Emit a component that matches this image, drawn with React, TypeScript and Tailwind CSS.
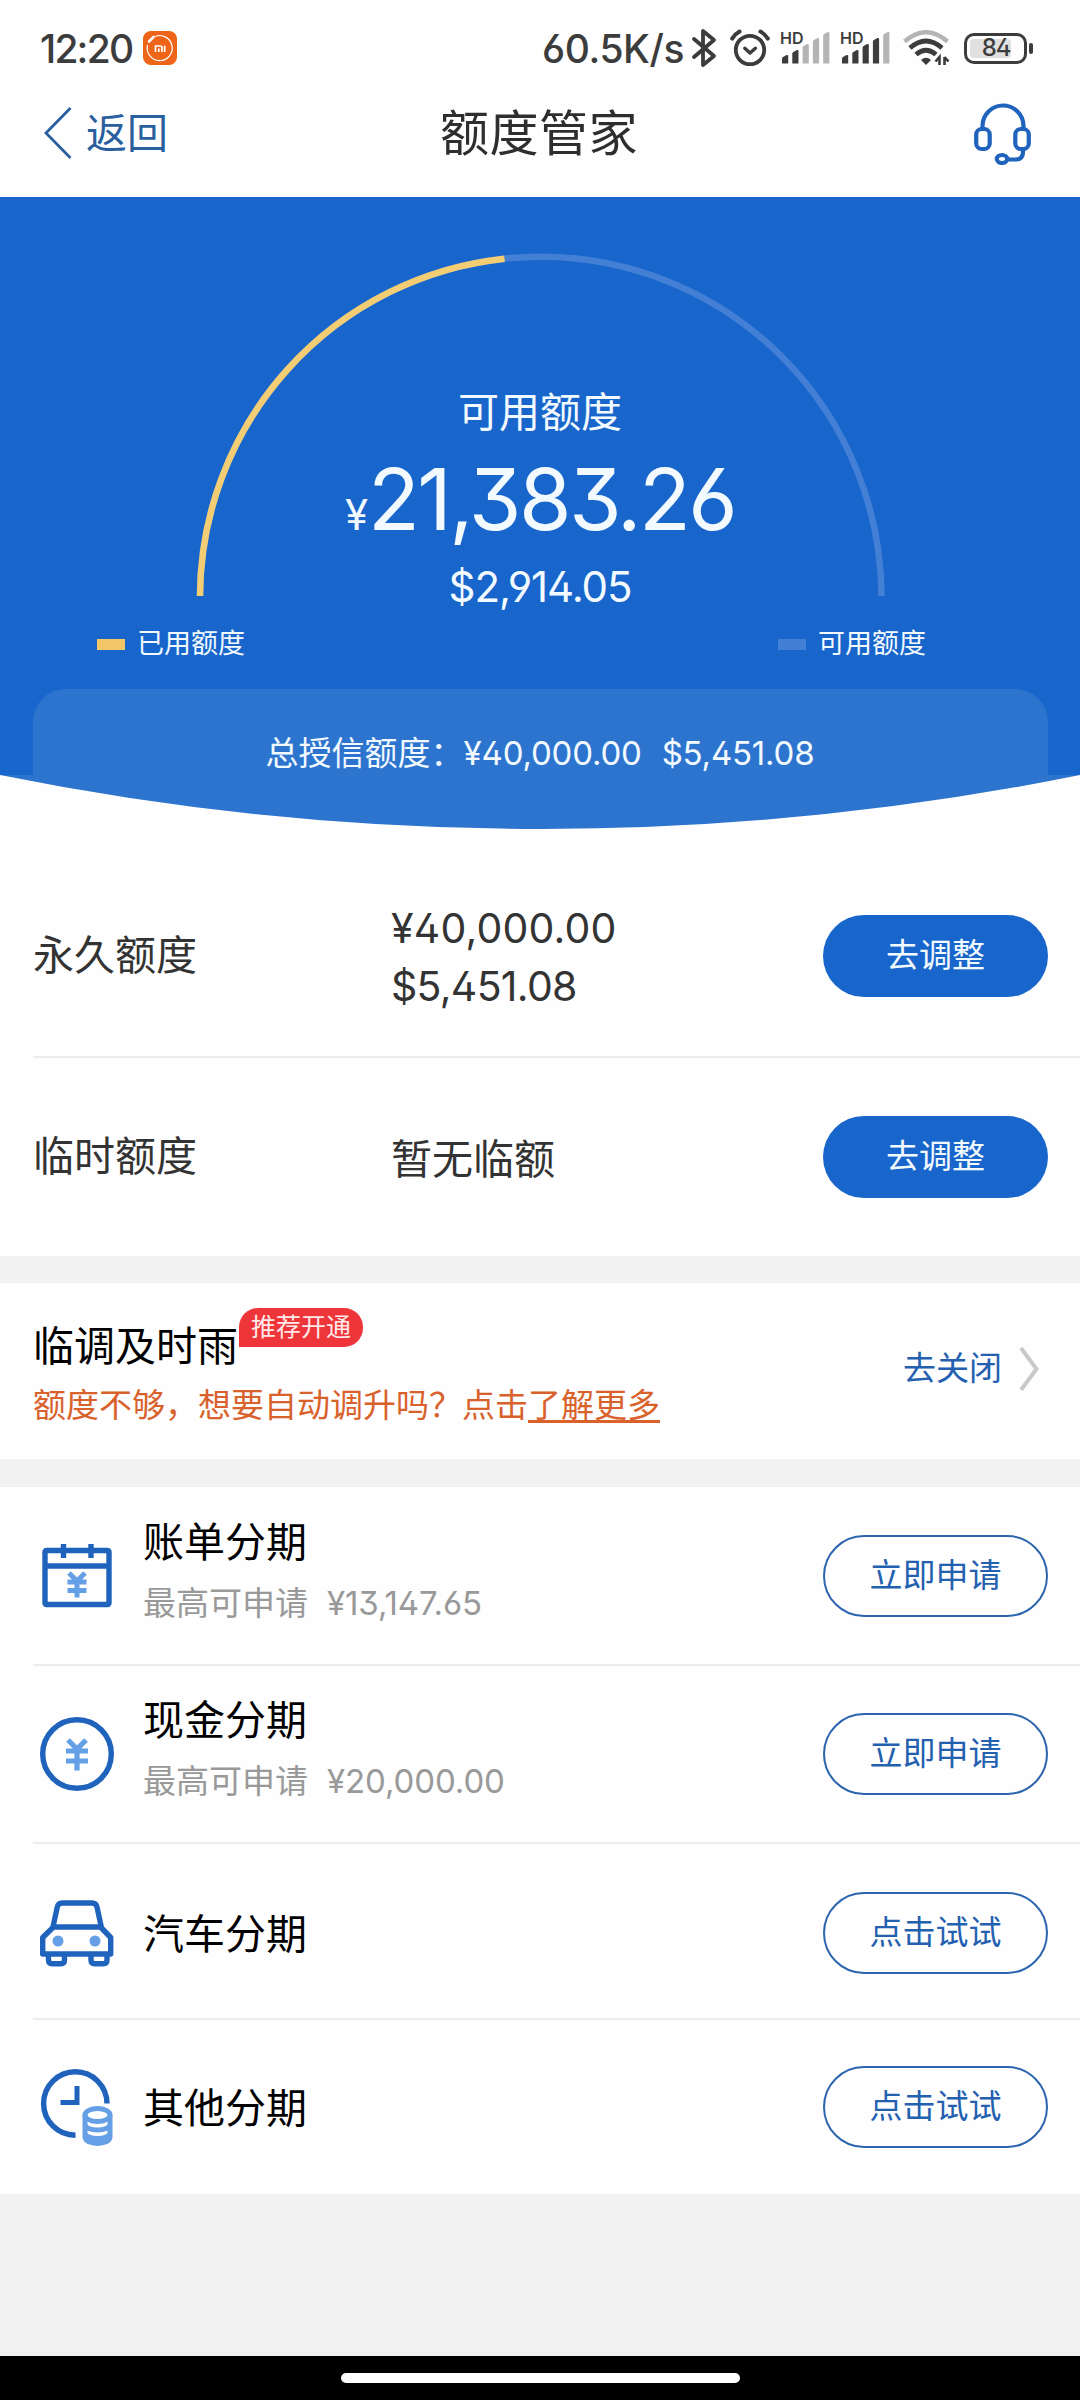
import type { ReactNode } from "react";

interface InstallmentItem {
  name: string;
  amount?: string;
  action: string;
  rowClass: string;
  icon: ReactNode;
}

const BLUE = "#1f63bd";
const LIGHT_BLUE = "#659fe6";

/* 状态栏图标 */
function MiIcon() {
  return (
    <svg width="34" height="34" viewBox="0 0 34 34" fill="none">
      <rect width="34" height="34" rx="8" fill="#ee6418" />
      <path d="M12 5.5A12.5 12.5 0 1 1 4.6 14" stroke="#fff" strokeWidth="1.2" />
      <path d="M6 10.5 10.5 6" stroke="#fff" strokeWidth="2.6" strokeLinecap="round" />
      <path d="M12.5 21v-6h4.8c1 0 1.7.7 1.7 1.6V21M15.8 17.4V21M21.7 14.8V21" stroke="#fff" strokeWidth="1.7" />
    </svg>
  );
}

function BluetoothIcon() {
  return (
    <svg width="26" height="40" viewBox="0 0 26 40" fill="none" stroke="#3c3c3c" strokeWidth="3.8" strokeLinejoin="round" strokeLinecap="round">
      <path d="M3 11 23 28 12 37V3L23 12 3 29" />
    </svg>
  );
}

function AlarmIcon() {
  return (
    <svg width="40" height="38" viewBox="0 0 40 38" fill="none" stroke="#3c3c3c" strokeLinecap="round">
      <circle cx="20" cy="21" r="14.2" strokeWidth="3.8" />
      <path d="M14.8 19.2 20 24l5.4-4.8" strokeWidth="3.4" strokeLinejoin="round" />
      <path d="M2.2 9.6Q5 5 9.6 2.6M37.8 9.6Q35 5 30.4 2.6" strokeWidth="4" />
    </svg>
  );
}

function SignalIcon({ level }: { level: number }) {
  return (
    <svg width="50" height="40" viewBox="0 0 50 40">
      <text x="0" y="16" fontSize="16" fontWeight="600" fill="#3c3c3c">HD</text>
      {[8, 13, 19, 25, 31].map((h, i) => (
        <path
          key={h}
          d={`M${2 + i * 10.3} ${38.5 - h}q0-1 1-1.6l3.6-1.8q1.6-.4 1.6 1V35.5h-6.2z`}
          fill={i < level ? "#3c3c3c" : "#b4b4b4"}
        />
      ))}
    </svg>
  );
}

function WifiIcon() {
  return (
    <svg width="47" height="36" viewBox="0 0 47 36" fill="none">
      <path d="M1.5 11.5Q23 -7 44.5 11.5" stroke="#b4b4b4" strokeWidth="4.4" />
      <path d="M7 18Q23 4 39 18" stroke="#3c3c3c" strokeWidth="4.8" />
      <path d="M13 24.5Q23 16 33 24.5" stroke="#3c3c3c" strokeWidth="4.8" />
      <path d="M18 30Q23 25.5 28 30L23 35z" fill="#3c3c3c" />
      <path d="M36.5 35V27l-4 4.5M41.500 27v8M41.5 27l4 4.5" stroke="#3c3c3c" strokeWidth="2.600" />
    </svg>
  );
}

function Battery() {
  return (
    <div className="flex items-center gap-[2px]">
      <div className="flex h-[31px] w-[63px] rounded-[10px] border-[3px] border-[#3c3c3c] p-[3px]">
        <div className="flex h-full w-[41px] items-center justify-center rounded-[4px] bg-[#e0e0e0] pl-[11px] text-[24px] font-medium leading-none tracking-[-1.2px] text-[#3c3c3c]">
          84
        </div>
      </div>
      <div className="h-[11px] w-[4px] rounded-[2px] bg-[#3c3c3c]" />
    </div>
  );
}

function HeadsetIcon() {
  return (
    <svg width="58" height="62" viewBox="0 0 58 62" fill="none" stroke={BLUE} strokeWidth="4.2">
      <path d="M8.5 26V23a20.5 20.5 0 0 1 41 0v3" />
      <rect x="2.2" y="26" width="13.5" height="20" rx="5.5" />
      <rect x="41.3" y="26" width="13.5" height="20" rx="5.5" />
      <path d="M49 46v3q0 7.500-7.500 7.500H33" />
      <ellipse cx="28" cy="56" rx="5.2" ry="4" />
    </svg>
  );
}

/* 列表图标 */
function BillIcon() {
  return (
    <svg width="80" height="80" viewBox="0 0 80 80" fill="none" stroke={BLUE}>
      <rect x="9" y="14.5" width="64" height="54" rx="1.5" strokeWidth="5.4" />
      <path d="M9 30h64M27.5 8v14M55 8v14" strokeWidth="5.4" />
      <path d="m33 37 8 8 8-8M41 45v16.500M31.500 46h19M31.500 54.500h19" stroke={LIGHT_BLUE} strokeWidth="5" />
    </svg>
  );
}

function CashIcon() {
  return (
    <svg width="80" height="80" viewBox="0 0 80 80" fill="none" stroke={BLUE}>
      <circle cx="41" cy="40" r="34.3" strokeWidth="5.4" />
      <path d="m32 26 9 9 9-9M41 35v21.500M30 37h22M30 47h22" stroke={LIGHT_BLUE} strokeWidth="5.200" />
    </svg>
  );
}

function CarIcon() {
  return (
    <svg width="80" height="80" viewBox="0 0 80 80" fill="none" stroke={BLUE} strokeWidth="5.4" strokeLinejoin="round">
      <path d="m17 34 4.300-20q.9-4 5-4H56q4.100 0 5 4l4.300 20" />
      <path d="M17.500 34h47L74.700 44.500V61H6.700V44.500z" />
      <path d="M12.500 61v6q0 3.700 3.700 3.700h8.600q3.700 0 3.700-3.700v-6M55 61v6q0 3.700 3.700 3.700h8.600q3.700 0 3.700-3.700v-6" />
      <circle cx="22" cy="48" r="5.5" fill={LIGHT_BLUE} stroke="none" />
      <circle cx="59" cy="48" r="5.5" fill={LIGHT_BLUE} stroke="none" />
    </svg>
  );
}

function OtherIcon() {
  return (
    <svg width="80" height="80" viewBox="0 0 80 80" fill="none" stroke={BLUE} strokeWidth="5.4">
      <path d="M71 36.500a31.700 31.700 0 1 0-31.500 31.700" />
      <path d="M41 19v16.500H24.500" strokeWidth="5" />
      <g stroke={LIGHT_BLUE} strokeWidth="5">
        <ellipse cx="61.5" cy="48" rx="12.5" ry="6.5" />
        <path d="M49 48v22c0 8.500 25 8.500 25 0V48M49 57c0 8 25 8 25 0M49 65.500c0 8 25 8 25 0" />
      </g>
    </svg>
  );
}

const INSTALLMENTS: InstallmentItem[] = [
  { name: "账单分期", amount: "¥13,147.65", action: "立即申请", rowClass: "h-[179px]", icon: <BillIcon /> },
  { name: "现金分期", amount: "¥20,000.00", action: "立即申请", rowClass: "h-[178px]", icon: <CashIcon /> },
  { name: "汽车分期", action: "点击试试", rowClass: "h-[176px] pt-[3px]", icon: <CarIcon /> },
  { name: "其他分期", action: "点击试试", rowClass: "h-[174px]", icon: <OtherIcon /> },
];

function StatusBar() {
  return (
    <div className="flex h-[96px] items-center justify-between pl-[40px] pr-[47px] text-[39px] font-medium leading-none text-[#3c3c3c]">
      <div className="flex items-center gap-[10px]">
        <span className="w-[93px] whitespace-nowrap tracking-[-1.8px]">12:20</span>
        <MiIcon />
      </div>
      <div className="flex items-center">
        <span className="w-[149px] whitespace-nowrap tracking-[-0.4px]">60.5K/s</span>
        <BluetoothIcon />
        <div className="ml-[13px]"><AlarmIcon /></div>
        <div className="ml-[10px]"><SignalIcon level={2} /></div>
        <div className="ml-[10px]"><SignalIcon level={4} /></div>
        <div className="ml-[13px]"><WifiIcon /></div>
        <div className="ml-[14px]"><Battery /></div>
      </div>
    </div>
  );
}

function NavHeader() {
  return (
    <header className="grid h-[101px] grid-cols-[1fr_auto_1fr] items-start pl-[44px] pr-[48px]">
      <button className="flex h-[74px] items-center gap-[14px] text-[41px] text-[#2a5f9f]">
        <svg width="28" height="52" viewBox="0 0 28 52" fill="none" stroke="#2a5f9f" strokeWidth="2.8">
          <path d="M26.5 1 2 26l24.5 25" />
        </svg>
        <span className="pt-[2px]">返回</span>
      </button>
      <h1 className="h-[74px] pl-[2px] text-[49px] leading-[75px] tracking-[0.5px] text-[#2e2e2e]">额度管家</h1>
      <div className="flex h-[74px] items-center justify-end pt-[1px]">
        <HeadsetIcon />
      </div>
    </header>
  );
}

function Gauge() {
  // 已用 46.5%，半圆周长 100
  return (
    <svg className="absolute left-[195px] top-[56px]" width="692" height="343" viewBox="0 0 692 343" fill="none" strokeWidth="6.5">
      <path d="M5 344.5A340.5 340.5 0 0 1 686.5 344.5" stroke="#427fd5" />
      <path d="M5 344.5A340.5 340.5 0 0 1 686.5 344.5" stroke="#f3cd74" pathLength="100" strokeDasharray="46.6 100" />
    </svg>
  );
}

function Hero() {
  return (
    <section className="relative text-[#f2faff]">
      <div className="flex h-[578px] flex-col items-center bg-[#1866cb]">
        <Gauge />
        <p className="mt-[185px] text-[41px] leading-[60px]">可用额度</p>
        <p className="mt-[10px] flex items-baseline leading-[96px]">
          <span className="text-[42px]">¥</span>
          <span className="text-[85px] tracking-[-2.6px]">21,383.26</span>
        </p>
        <p className="mt-[-1px] text-[42px] leading-[50px] tracking-[-1.1px]">$2,914.05</p>
        <div className="mt-[12px] flex w-full justify-between pl-[97px] pr-[154px] text-[27px] leading-[40px]">
          <span className="flex items-center gap-[12px]">
            <i className="h-[11px] w-[28px] bg-[#f3c768]" />
            已用额度
          </span>
          <span className="flex items-center gap-[12px]">
            <i className="h-[11px] w-[28px] bg-[#427fd5]" />
            可用额度
          </span>
        </div>
        <div className="mt-auto flex h-[86px] w-[1015px] items-end justify-center whitespace-nowrap rounded-t-[33px] bg-[#2d74ce] text-[33px] leading-[44px]">
          <span>总授信额度：</span>
          <span className="tracking-[-0.2px]">¥40,000.00</span>
          <span className="ml-[20px] tracking-[-0.2px]">$5,451.08</span>
        </div>
      </div>
      <svg className="block" width="1080" height="54" viewBox="0 0 1080 54">
        <path d="M0 0A2727 2727 0 0 0 1080 0z" fill="#2d74ce" />
      </svg>
    </section>
  );
}

function QuotaRow({ label, children }: { label: string; children: ReactNode }) {
  return (
    <div className="flex items-center text-[41px] text-[#333]">
      <span className="w-[358px]">{label}</span>
      <div className="flex-1">{children}</div>
      <button className="h-[82px] w-[225px] rounded-full bg-[#1866cb] text-[33px] text-[#f2faff]">
        去调整
      </button>
    </div>
  );
}

function InstallmentRow({ item, last }: { item: InstallmentItem; last: boolean }) {
  return (
    <div className={`ml-[33px] flex items-center pr-[32px] ${item.rowClass} ${last ? "" : "border-b-2 border-[#ececec]"}`}>
      <div className="ml-[3px]">{item.icon}</div>
      <div className={`ml-[27px] flex-1 ${item.amount ? "pb-[8px]" : "pt-[2px]"}`}>
        <p className="text-[41px] leading-[62px] text-black">{item.name}</p>
        {item.amount && (
          <p className="flex text-[33px] leading-[60px] text-[#999]">
            最高可申请
            <span className="ml-[19px] tracking-[-0.1px]">{item.amount}</span>
          </p>
        )}
      </div>
      <button className="h-[82px] w-[225px] rounded-full border-2 border-[#2c65ae] text-[33px] text-[#2460b0]">
        {item.action}
      </button>
    </div>
  );
}

export default function App() {
  return (
    <div className="flex h-[2400px] w-[1080px] flex-col overflow-hidden bg-[#f1f1f1] font-['Inter','Noto_Sans_CJK_SC',sans-serif] [font-feature-settings:'ss01','cv09']">
      <div className="bg-[#fefefe]">
        <StatusBar />
        <NavHeader />
      </div>

      {/* 额度总览 */}
      <div className="h-[1059px] bg-[#fefefe]">
        <Hero />
        <div className="ml-[33px] flex h-[229px] flex-col justify-end border-b-2 border-[#ececec] pb-[41px] pr-[32px]">
          <QuotaRow label="永久额度">
            <p className="pt-[2px] leading-[58px] tracking-[0.2px]">¥40,000.00</p>
            <p className="leading-[58px] tracking-[-0.7px]">$5,451.08</p>
          </QuotaRow>
        </div>
        <div className="ml-[33px] flex h-[198px] flex-col justify-center pr-[32px]">
          <QuotaRow label="临时额度">
            <p className="pt-[6px]">暂无临额</p>
          </QuotaRow>
        </div>
      </div>

      {/* 临调及时雨 */}
      <div className="mt-[27px] flex h-[176px] items-center justify-between bg-[#fefefe] pl-[33px] pr-[41px]">
        <div className="self-start pt-[25px]">
          <div className="flex h-[62px] items-start">
            <span className="pt-[8px] text-[41px] leading-[60px] text-black">临调及时雨</span>
            <span className="ml-[1px] flex h-[39px] w-[124px] items-center justify-center rounded-[19px] rounded-bl-none bg-[#ee353a] text-[25px] text-[#ffe9e9]">
              推荐开通
            </span>
          </div>
          <p className="pt-[3px] text-[33px] leading-[64px] text-[#d9622c]">
            额度不够，想要自动调升吗？点击
            <a className="underline decoration-[3px] underline-offset-[3px]">了解更多</a>
          </p>
        </div>
        <div className="flex items-center gap-[17px] pb-[4px] text-[33px] text-[#2460b0]">
          去关闭
          <svg width="20" height="44" viewBox="0 0 20 44" fill="none" stroke="#c9c9c9" strokeWidth="4">
            <path d="m2 1 15.5 21L2 43" />
          </svg>
        </div>
      </div>

      {/* 分期产品 */}
      <div className="mt-[28px] bg-[#fefefe]">
        {INSTALLMENTS.map((item, i) => (
          <InstallmentRow key={item.name} item={item} last={i === INSTALLMENTS.length - 1} />
        ))}
      </div>

      <div className="mt-auto flex h-[44px] justify-center bg-black pt-[17px]">
        <div className="h-[10px] w-[399px] rounded-full bg-white" />
      </div>
    </div>
  );
}
